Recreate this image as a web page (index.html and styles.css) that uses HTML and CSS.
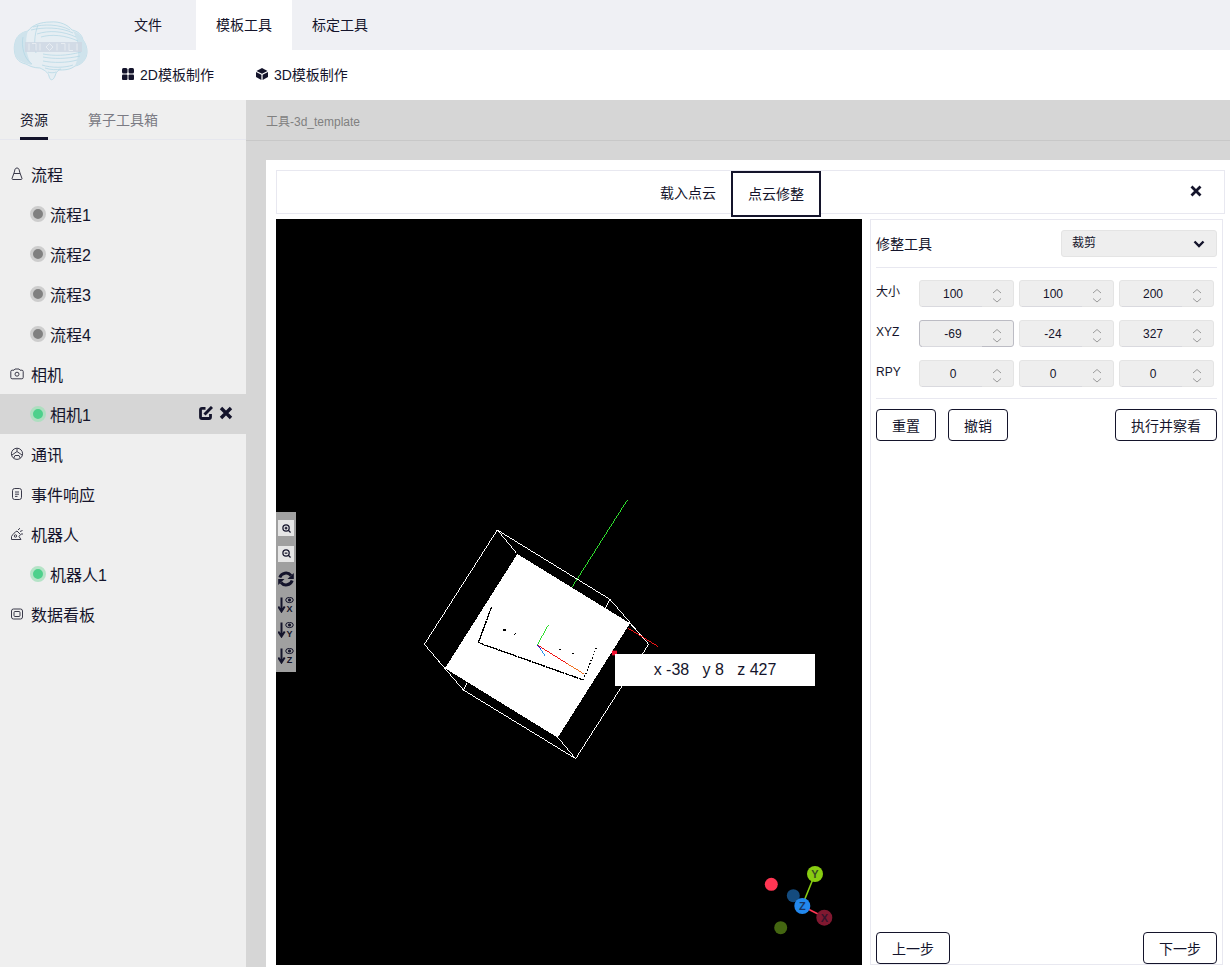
FILE: index.html
```html
<!DOCTYPE html>
<html lang="zh">
<head>
<meta charset="utf-8">
<title>模板工具</title>
<link rel="stylesheet" href="styles.css">
</head>
<body>
<div class="app">
  <header class="header">
    <div class="logo">
      <svg width="76" height="62" viewBox="0 0 76 62" fill="none">
        <path d="M2 22C3 15 9 11 15 10C19 4 28 1 37 1C47 0 55 4 59 9C65 10 69 14 70 19C74 24 75 31 73 36C71 41 67 44 62 45C57 49 51 49 46 49C44 50 43 52 42 55C40 60 37 60 36 55C35 51 31 49 27 47C21 47 16 45 13 43C7 42 3 38 2 33C1 29 1 25 2 22Z" fill="#e6eef3" stroke="#b4d8e5" stroke-width=".8"/>
        <path d="M2 22C3 15 9 11 15 10C12 18 12 34 19 44C9 42 3 38 2 33C1 29 1 25 2 22Z" fill="#cfe3ec"/>
        <path d="M60 10C66 12 69 15 70 19C74 24 75 31 73 36C71 41 67 44 62 45C67 34 66 20 60 10Z" fill="#cfe3ec"/>
        <g stroke="#b0d6e4" stroke-width=".7">
          <path d="M20 6C30 3 46 3 57 9"/><path d="M18 9C30 6 48 6 60 12"/><path d="M24 13C36 9 50 10 63 16"/><path d="M28 16C38 13 52 14 65 20"/>
          <path d="M30 33C40 35 54 35 68 31"/><path d="M30 36C40 38 54 38 67 35"/><path d="M30 40C40 42 54 42 64 39"/><path d="M29 44C38 47 52 47 60 44"/>
          <path d="M32 47C38 49 44 49 48 48"/><path d="M35 51C37 52 41 52 43 51"/>
          <path d="M10 16C8 25 11 38 19 43"/><path d="M25 4C21 14 21 26 23 32"/>
        </g>
        <rect x="12" y="21" width="57" height="10" fill="#cdd6e2" opacity=".8"/>
        <g stroke="#e9edf2" stroke-width=".9">
          <path d="M16 22.500V29.500M19 22.500H23V29.500M27 22.500V29.500M33 26L36.500 22.500L40 26L36.500 29.500ZM44 22.500V29.500M48 22.500H52V29.500M56 22.500V29.500H60M64 22.500V29.500"/>
        </g>
      </svg>
    </div>
    <div class="header-main">
      <nav class="menu">
        <span class="menu-tab">文件</span>
        <span class="menu-tab menu-tab-active">模板工具</span>
        <span class="menu-tab">标定工具</span>
      </nav>
      <div class="ribbon">
        <span class="ribbon-item">
          <svg width="12" height="12" viewBox="0 0 12 12" fill="#14142b"><rect width="5.500" height="5.500" rx="1.500"/><rect x="6.500" width="5.500" height="5.500" rx="1.500"/><rect y="6.500" width="5.500" height="5.500" rx="1"/><rect x="6.500" y="6.500" width="5.500" height="5.500" rx="1"/></svg>
          2D模板制作
        </span>
        <span class="ribbon-item">
          <svg width="12" height="12" viewBox="0 0 12 12" fill="#14142b"><path d="M6 0L11.500 3L6 5.800L.5 3Z"/><path d="M0 4L5.400 6.800V12L0 9Z"/><path d="M12 4L6.600 6.800V12L12 9Z"/></svg>
          3D模板制作
        </span>
      </div>
    </div>
  </header>

  <div class="body">
    <aside class="sidebar">
      <div class="side-tabs">
        <span class="side-tab side-tab-active">资源</span>
        <span class="side-tab">算子工具箱</span>
      </div>
      <div class="tree">
        <div class="tree-row">
          <svg class="tree-icon" width="14" height="14" viewBox="0 0 14 14" fill="none" stroke="#3a3a4a" stroke-width="1"><path d="M7 1C5.400 1 4.700 2.300 4.600 4L4 6L2 11.500C2 12 2.300 12.500 3 12.500H11C11.700 12.500 12 12 12 11.500L10 6L9.400 4C9.300 2.300 8.600 1 7 1Z"/><path d="M4 6.500H10"/></svg>
          流程
        </div>
        <div class="tree-row tree-child"><i class="dot"></i>流程1</div>
        <div class="tree-row tree-child"><i class="dot"></i>流程2</div>
        <div class="tree-row tree-child"><i class="dot"></i>流程3</div>
        <div class="tree-row tree-child"><i class="dot"></i>流程4</div>
        <div class="tree-row">
          <svg class="tree-icon" width="14" height="14" viewBox="0 0 14 14" fill="none" stroke="#3a3a4a" stroke-width="1"><path d="M.8 4.500C.8 3.700 1.300 3.200 2.100 3.200H4L5 2H9L10 3.200H11.900C12.700 3.200 13.200 3.700 13.200 4.500V10.500C13.200 11.300 12.700 11.800 11.900 11.800H2.100C1.300 11.800 .8 11.300 .8 10.500Z"/><circle cx="7" cy="7.200" r="2"/></svg>
          相机
        </div>
        <div class="tree-row tree-child tree-selected">
          <i class="dot dot-on"></i>相机1
          <span class="row-actions">
            <svg width="14" height="14" viewBox="0 0 14 14" fill="none" stroke="#14142b" stroke-width="2.800"><path d="M6.500 2.300H3C2 2.300 1.500 2.800 1.500 3.800V11C1.500 12 2 12.500 3 12.500H10C11 12.500 11.500 12 11.500 11V8"/><path d="M5.500 8.500L13 1" stroke-width="3"/></svg>
            <svg width="14" height="14" viewBox="0 0 14 14" fill="none" stroke="#14142b" stroke-width="3.400"><path d="M2 2L12 12M12 2L2 12"/></svg>
          </span>
        </div>
        <div class="tree-row">
          <svg class="tree-icon" width="14" height="14" viewBox="0 0 14 14" fill="none" stroke="#3a3a4a" stroke-width="1"><circle cx="7" cy="6.800" r="5.600"/><path d="M7 1.500V4.500M7 4.500L2 8M7 4.500L12 8M3.800 11L5 8.500H9L10.200 11"/></svg>
          通讯
        </div>
        <div class="tree-row">
          <svg class="tree-icon" width="14" height="14" viewBox="0 0 14 14" fill="none" stroke="#3a3a4a" stroke-width="1"><rect x="2.500" y="1.500" width="9" height="11" rx="2.200"/><path d="M5 5H9M5 7.200H9M5 9.400H7.500"/></svg>
          事件响应
        </div>
        <div class="tree-row">
          <svg class="tree-icon" width="14" height="14" viewBox="0 0 14 14" fill="none" stroke="#3a3a4a" stroke-width="1"><path d="M1.500 12.500V9.500C3 7 5 5 7 4L10.500 7.500L9 9.500L11 12.500Z"/><path d="M8 3L10 1.200M10 4.500L12.500 3.500M11 7L13 7"/><circle cx="5.500" cy="9" r="1.200"/></svg>
          机器人
        </div>
        <div class="tree-row tree-child"><i class="dot dot-on"></i>机器人1</div>
        <div class="tree-row">
          <svg class="tree-icon" width="14" height="14" viewBox="0 0 14 14" fill="none" stroke="#3a3a4a" stroke-width="1"><rect x="1.500" y="2" width="11" height="10" rx="2"/><rect x="4" y="4.500" width="6" height="5" rx="1"/></svg>
          数据看板
        </div>
      </div>
    </aside>

    <main class="content">
      <div class="crumb">工具-3d_template</div>
      <div class="card">
        <div class="wizard-tabs">
          <span class="wizard-tab">载入点云</span>
          <span class="wizard-tab wizard-tab-active">点云修整</span>
          <svg class="wizard-close" width="12" height="12" viewBox="0 0 12 12" fill="none" stroke="#14142b" stroke-width="2.800"><path d="M1.500 1.500L10.500 10.500M10.500 1.500L1.500 10.500"/></svg>
        </div>
        <div class="workspace">
          <div class="viewer">
            <svg class="scene" width="586" height="746" viewBox="0 0 586 746">
              <g class="scene-lines" transform="translate(134 271) scale(.33333)" fill="none">
                <path d="M262 120L43 463L160 600L497 806L716 463L600 328Z" stroke="#fff" stroke-width="3"/>
                <path d="M262 120L320 190M43 463L105 535M497 806L443 742M716 463L660 400M600 328L585 355M160 600L170 580" stroke="#fff" stroke-width="3"/>
                <path d="M487 290L652 30" stroke="#2ee02e" stroke-width="3"/>
                <path d="M655 415L745 470" stroke="#f01414" stroke-width="3"/>
                <path d="M322 192L105 535L443 743L660 400Z" fill="#fff"/>
                <path d="M245 350L205 458L520 570" stroke="#000" stroke-width="4" stroke-dasharray="14 1"/>
                <path d="M520 570L560 470" stroke="#000" stroke-width="4" stroke-dasharray="4 6"/>
                <path d="M282 418h5v5h-5ZM312 436l6-6M448 480l6-5M485 492l6-3" stroke="#000" stroke-width="3"/>
                <path d="M382 465L415 405" stroke="#2ee02e" stroke-width="3"/>
                <path d="M382 465L470 520" stroke="#f01414" stroke-width="3"/>
                <path d="M470 520L522 552" stroke="#f07020" stroke-width="3"/>
                <path d="M382 465L392 478" stroke="#1414e0" stroke-width="3"/>
                <path d="M392 478L405 497" stroke="#2a90ee" stroke-width="3"/>
                <rect x="606" y="482" width="15" height="14" fill="#f01030"/>
              </g>
              <g class="gizmo">
                <path d="M526 687L539 655" stroke="#88cc11" stroke-width="1.600"/>
                <path d="M526 687L548 698" stroke="#ff3653" stroke-width="1.600"/>
                <circle cx="495.300" cy="665.300" r="6.500" fill="#ff3653"/>
                <circle cx="517.300" cy="676.700" r="6.500" fill="#144b7e"/>
                <circle cx="504.700" cy="708.700" r="6.500" fill="#446611"/>
                <circle cx="539" cy="655" r="8" fill="#88cc11"/>
                <circle cx="548.300" cy="698.700" r="8" fill="#801830"/>
                <circle cx="526.300" cy="687" r="8" fill="#2288ee"/>
                <text x="539" y="659" class="gizmo-label">Y</text>
                <text x="548.300" y="702.700" class="gizmo-label">X</text>
                <text x="526.300" y="691" class="gizmo-label">Z</text>
              </g>
            </svg>
            <div class="viewer-tools">
              <span class="tool-btn tool-btn-light">
                <svg width="9" height="9" viewBox="0 0 10 10" fill="none" stroke="#14142b" stroke-width="1.400"><circle cx="4.500" cy="4.500" r="3.500"/><path d="M7 7L9.500 9.500M3 4.500H6M4.500 3V6"/></svg>
              </span>
              <span class="tool-btn tool-btn-light">
                <svg width="9" height="9" viewBox="0 0 10 10" fill="none" stroke="#14142b" stroke-width="1.400"><circle cx="4.500" cy="4.500" r="3.500"/><path d="M7 7L9.500 9.500M3 4.500H6"/></svg>
              </span>
              <span class="tool-btn">
                <svg width="16" height="16" viewBox="0 0 16 16" fill="none" stroke="#14142b" stroke-width="3"><path d="M1.800 6.500A6.500 6.500 0 0 1 13 4.500"/><path d="M14.200 9.500A6.500 6.500 0 0 1 3 11.500"/><path d="M15.800 2V8H9.500Z" fill="#14142b" stroke="none"/><path d="M.2 14V8H6.500Z" fill="#14142b" stroke="none"/></svg>
              </span>
              <span class="tool-btn">
                <svg width="16" height="16" viewBox="0 0 16 16" fill="none" stroke="#14142b"><path d="M3.500 .5V14M.3 9.500L3.500 14.500L6.700 9.500" stroke-width="2"/><ellipse cx="11.500" cy="3" rx="3.800" ry="2.600"/><circle cx="11.500" cy="3" r="1.100" fill="#14142b"/><text x="11.500" y="15" class="tool-letter">X</text></svg>
              </span>
              <span class="tool-btn">
                <svg width="16" height="16" viewBox="0 0 16 16" fill="none" stroke="#14142b"><path d="M3.500 .5V14M.3 9.500L3.500 14.500L6.700 9.500" stroke-width="2"/><ellipse cx="11.500" cy="3" rx="3.800" ry="2.600"/><circle cx="11.500" cy="3" r="1.100" fill="#14142b"/><text x="11.500" y="15" class="tool-letter">Y</text></svg>
              </span>
              <span class="tool-btn">
                <svg width="16" height="16" viewBox="0 0 16 16" fill="none" stroke="#14142b"><path d="M3.500 .5V14M.3 9.500L3.500 14.500L6.700 9.500" stroke-width="2"/><ellipse cx="11.500" cy="3" rx="3.800" ry="2.600"/><circle cx="11.500" cy="3" r="1.100" fill="#14142b"/><text x="11.500" y="15" class="tool-letter">Z</text></svg>
              </span>
            </div>
            <div class="pick-label">x -38 &nbsp; y 8 &nbsp; z 427</div>
          </div>

          <section class="panel">
            <div class="panel-head">
              <span class="panel-title">修整工具</span>
              <div class="select">裁剪
                <svg width="12" height="8" viewBox="0 0 12 8" fill="none" stroke="#14142b" stroke-width="2.400"><path d="M1.500 1.500L6 6L10.500 1.500"/></svg>
              </div>
            </div>
            <div class="fields">
              <div class="field-row">
                <span class="field-label">大小</span>
                <div class="num"><span>100</span><svg class="spin" width="10" height="16" viewBox="0 0 10 16" fill="none" stroke="#9a9a9a"><path d="M1 5L5 1.500L9 5M1 10.500L5 14L9 10.500"/></svg></div>
                <div class="num"><span>100</span><svg class="spin" width="10" height="16" viewBox="0 0 10 16" fill="none" stroke="#9a9a9a"><path d="M1 5L5 1.500L9 5M1 10.500L5 14L9 10.500"/></svg></div>
                <div class="num"><span>200</span><svg class="spin" width="10" height="16" viewBox="0 0 10 16" fill="none" stroke="#9a9a9a"><path d="M1 5L5 1.500L9 5M1 10.500L5 14L9 10.500"/></svg></div>
              </div>
              <div class="field-row">
                <span class="field-label">XYZ</span>
                <div class="num num-focus"><span>-69</span><svg class="spin" width="10" height="16" viewBox="0 0 10 16" fill="none" stroke="#9a9a9a"><path d="M1 5L5 1.500L9 5M1 10.500L5 14L9 10.500"/></svg></div>
                <div class="num"><span>-24</span><svg class="spin" width="10" height="16" viewBox="0 0 10 16" fill="none" stroke="#9a9a9a"><path d="M1 5L5 1.500L9 5M1 10.500L5 14L9 10.500"/></svg></div>
                <div class="num"><span>327</span><svg class="spin" width="10" height="16" viewBox="0 0 10 16" fill="none" stroke="#9a9a9a"><path d="M1 5L5 1.500L9 5M1 10.500L5 14L9 10.500"/></svg></div>
              </div>
              <div class="field-row">
                <span class="field-label">RPY</span>
                <div class="num"><span>0</span><svg class="spin" width="10" height="16" viewBox="0 0 10 16" fill="none" stroke="#9a9a9a"><path d="M1 5L5 1.500L9 5M1 10.500L5 14L9 10.500"/></svg></div>
                <div class="num"><span>0</span><svg class="spin" width="10" height="16" viewBox="0 0 10 16" fill="none" stroke="#9a9a9a"><path d="M1 5L5 1.500L9 5M1 10.500L5 14L9 10.500"/></svg></div>
                <div class="num"><span>0</span><svg class="spin" width="10" height="16" viewBox="0 0 10 16" fill="none" stroke="#9a9a9a"><path d="M1 5L5 1.500L9 5M1 10.500L5 14L9 10.500"/></svg></div>
              </div>
            </div>
            <div class="actions">
              <button class="btn btn-small">重置</button>
              <button class="btn btn-small">撤销</button>
              <button class="btn btn-run">执行并察看</button>
            </div>
            <div class="steps">
              <button class="btn btn-step">上一步</button>
              <button class="btn btn-step">下一步</button>
            </div>
          </section>
        </div>
      </div>
    </main>
  </div>
</div>
</body>
</html>
```
FILE: styles.css
```css
* { box-sizing: border-box; }
html, body { margin: 0; padding: 0; }
body {
  font-family: "Liberation Sans", "Noto Sans CJK SC", sans-serif;
  color: #14142b;
  background: #fff;
  overflow: hidden;
}
.app { width: 1230px; height: 967px; display: flex; flex-direction: column; overflow: hidden; }

.header { height: 100px; display: flex; background: #eff0f4; flex: none; }
.logo { width: 100px; display: flex; align-items: flex-start; padding: 21px 0 0 13px; }
.header-main { flex: 1; display: flex; flex-direction: column; }
.menu { height: 50px; display: flex; }
.menu-tab { width: 96px; display: flex; align-items: center; justify-content: center; font-size: 14px; padding-bottom: 2px; }
.menu-tab-active { background: #fff; }
.ribbon { height: 50px; background: #fff; display: flex; align-items: center; gap: 42px; padding-left: 22px; }
.ribbon-item { display: flex; align-items: center; gap: 6px; font-size: 14px; padding-bottom: 2px; }

.body { flex: 1; display: flex; min-height: 0; }
.sidebar { width: 246px; background: #efefef; flex: none; }
.side-tabs { height: 40px; display: flex; gap: 40px; padding-left: 20px; border-bottom: 1px solid #e6e7ee; }
.side-tab { font-size: 14px; line-height: 40px; height: 40px; color: #7b7b84; }
.side-tab-active { color: #14142b; border-bottom: 3px solid #14142b; }
.tree { padding-top: 14px; }
.tree-row { height: 40px; display: flex; align-items: center; font-size: 16px; padding-left: 10px; position: relative; }
.tree-icon { margin-right: 7px; flex: none; margin-top: -1px; }
.tree-child { padding-left: 30px; }
.tree-selected { background: #d6d6d6; }
.dot {
  width: 16px; height: 16px; border-radius: 50%;
  background: #808080; border: 3px solid #cdcdcd; margin-right: 5px; flex: none;
}
.dot-on { background: #4dd08b; border-color: #b5e3c7; }
.tree-selected .dot-on { border-color: #aedec0; }
.tree-child { letter-spacing: 0; }
.tree-child .dot { margin-right: 4px; }
.row-actions { position: absolute; right: 13px; top: 12px; display: flex; gap: 6px; }

.content { flex: 1; background: #d6d6d6; display: flex; flex-direction: column; padding-left: 20px; min-width: 0; }
.crumb { height: 41px; margin-left: -20px; padding-left: 20px; line-height: 44px; font-size: 12px; color: #808080; border-bottom: 1px solid #c8c8c8; flex: none; }
.card { margin-top: 19px; flex: 1; background: #fff; padding: 10px 5px 0 10px; min-height: 0; }

.wizard-tabs {
  height: 44px; border: 1px solid #e8e8f0; display: flex; justify-content: center;
  padding-right: 36px; position: relative;
}
.wizard-tab { height: 46px; padding: 0 16px 2px; font-size: 14px; display: flex; align-items: center; margin-top: -1px; }
.wizard-tab-active { border: 2px solid #14142b; margin-top: 0; margin-left: -1px; padding: 0 15px 2px; background: #fff; }
.wizard-close { position: absolute; right: 22px; top: 14px; }

.workspace { margin-top: 5px; display: flex; gap: 8px; height: 746px; }
.viewer { width: 586px; height: 746px; background: #000; position: relative; flex: none; }
.scene { display: block; }
.scene-lines path { shape-rendering: crispEdges; }
.gizmo-label { font-size: 11px; font-weight: 700; text-anchor: middle; fill: #14142b; opacity: .7; font-family: "Liberation Sans", sans-serif; }
.viewer-tools {
  position: absolute; left: 0; top: 293px; width: 20px; height: 160px; background: #a0a0a0;
  display: flex; flex-direction: column; align-items: center; padding-top: 8px; gap: 9.500px;
}
.tool-btn { width: 16px; height: 16px; display: flex; align-items: center; justify-content: center; }
.tool-btn-light { background: #e6e6e6; }
.tool-letter { font-size: 9px; font-weight: 700; text-anchor: middle; fill: #14142b; stroke: none; font-family: "Liberation Sans", sans-serif; }
.pick-label {
  position: absolute; left: 339px; top: 435px; width: 200px; height: 32px; background: #fff;
  font-size: 16px; line-height: 32px; text-align: center; color: #14142b;
}

.panel { width: 353px; height: 746px; border: 1px solid #e8e8f0; padding: 0 5px; display: flex; flex-direction: column; }
.panel-head { height: 48px; padding-top: 10px; display: flex; justify-content: space-between; align-items: flex-start; border-bottom: 1px solid #e8e8f0; }
.panel-title { font-size: 14px; line-height: 28px; }
.select {
  width: 156px; height: 27px; background: #eee; border: 1px solid #e4e4e4; border-radius: 3px;
  font-size: 12px; line-height: 24px; padding: 0 10px; display: flex; justify-content: space-between; align-items: flex-start;
}
.select svg { margin-top: 9px; margin-right: 1px; }
.fields { padding-top: 12px; height: 131px; border-bottom: 1px solid #e8e8f0; display: flex; flex-direction: column; gap: 13px; }
.field-row { height: 27px; display: flex; gap: 5px; align-items: flex-start; padding-right: 3px; }
.field-label { width: 38px; font-size: 12px; line-height: 24px; flex: none; }
.num {
  width: 95px; height: 27px; background: #eee; border: 1px solid #e4e4e4; border-radius: 3px;
  display: flex; align-items: center; font-size: 12px; position: relative;
}
.num::after { content: ""; position: absolute; left: 2px; bottom: -1px; width: 60px; height: 1px; background: #d9d9de; }
.num span { width: 66px; text-align: center; }
.num-focus { border-color: #bcbcc4; }
.spin { position: absolute; right: 11px; top: 7px; }
.actions { display: flex; gap: 12px; padding-top: 10px; }
.btn {
  height: 32px; background: #fff; border: 1px solid #14142b; border-radius: 4px;
  font: inherit; font-size: 14px; color: #14142b; padding: 0;
}
.btn-small { width: 60px; }
.btn-run { width: 102px; margin-left: auto; }
.steps { margin-top: auto; display: flex; justify-content: space-between; }
.btn-step { width: 74px; }
```
